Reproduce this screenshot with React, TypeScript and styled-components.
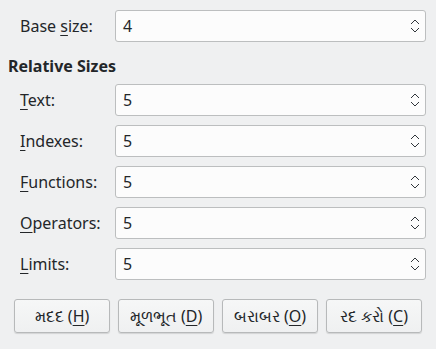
import React from "react";
import styled, { createGlobalStyle } from "styled-components";

const GlobalStyle = createGlobalStyle`
  html, body {
    margin: 0;
    padding: 0;
    background: #eff0f1;
  }
  body {
    font-family: "Noto Sans", "Liberation Sans", sans-serif;
    font-size: 16px;
    color: #232629;
  }
`;

interface SizeRow {
  label: string;
  mnemonic: number;
  value: number;
}

const Rows: SizeRow[] = [
  { label: "Text:", mnemonic: 0, value: 5 },
  { label: "Indexes:", mnemonic: 0, value: 5 },
  { label: "Functions:", mnemonic: 0, value: 5 },
  { label: "Operators:", mnemonic: 0, value: 5 },
  { label: "Limits:", mnemonic: 0, value: 5 },
];

const Buttons = [
  { text: "મદદ", key: "H" },
  { text: "મૂળભૂત", key: "D" },
  { text: "બરાબર", key: "O" },
  { text: "રદ કરો", key: "C" },
];

const Mnemonic = ({ text, index }: { text: string; index: number }) => (
  <>
    {text.slice(0, index)}
    <U>{text[index]}</U>
    {text.slice(index + 1)}
  </>
);

const Spinner = ({ value }: { value: number }) => (
  <SpinBox>
    <SpinValue>{value}</SpinValue>
    <svg width="12" height="18" viewBox="0 0 12 18">
      <path d="M2 7 L6 3 L10 7" fill="none" stroke="#31363b" strokeWidth="1" />
      <path d="M2 11 L6 15 L10 11" fill="none" stroke="#31363b" strokeWidth="1" />
    </svg>
  </SpinBox>
);

const App = () => (
  <Page>
    <GlobalStyle />
    <Row>
      <Label>
        <Mnemonic text="Base size:" index={5} />
      </Label>
      <Spinner value={4} />
    </Row>
    <Heading>Relative Sizes</Heading>
    <Group>
      {Rows.map((row) => (
        <Row key={row.label}>
          <Label>
            <Mnemonic text={row.label} index={row.mnemonic} />
          </Label>
          <Spinner value={row.value} />
        </Row>
      ))}
    </Group>
    <ButtonBar>
      {Buttons.map((b) => (
        <Button key={b.key}>
          {b.text} (<U>{b.key}</U>)
        </Button>
      ))}
    </ButtonBar>
  </Page>
);

const Page = styled.div`
  display: flex;
  flex-direction: column;
  width: 436px;
  height: 349px;
  box-sizing: border-box;
  padding: 10px 10px 0 8px;
`;

const Row = styled.div`
  display: flex;
  align-items: center;
  height: 32px;
`;

const Group = styled.div`
  display: flex;
  flex-direction: column;
  gap: 9px;
`;

const Label = styled.div`
  width: 107px;
  padding-left: 12px;
  box-sizing: border-box;
  flex-shrink: 0;
  white-space: nowrap;
`;

const U = styled.span`
  text-decoration: underline;
  text-underline-offset: 3px;
`;

const Heading = styled.div`
  font-weight: bold;
  height: 32px;
  line-height: 32px;
  margin: 8px 0 2px;
`;

const SpinBox = styled.div`
  flex: 1;
  height: 32px;
  box-sizing: border-box;
  display: flex;
  align-items: center;
  justify-content: space-between;
  padding: 0 4px 0 7px;
  background: #fcfcfc;
  border: 1px solid #bcbebf;
  border-radius: 3px;
`;

const SpinValue = styled.span`
  color: #232629;
`;

const ButtonBar = styled.div`
  display: grid;
  grid-template-columns: repeat(4, 96px);
  column-gap: 8px;
  margin-top: 19px;
  padding-left: 6px;
`;

const Button = styled.button`
  height: 34px;
  font-family: inherit;
  font-size: 16px;
  color: #232629;
  background: linear-gradient(#f6f7f7, #eff0f1);
  border: 1px solid #b7b9ba;
  border-radius: 3px;
  box-shadow: 0 1px 1px rgba(0, 0, 0, 0.12);
  padding: 0;
`;

export default App;
